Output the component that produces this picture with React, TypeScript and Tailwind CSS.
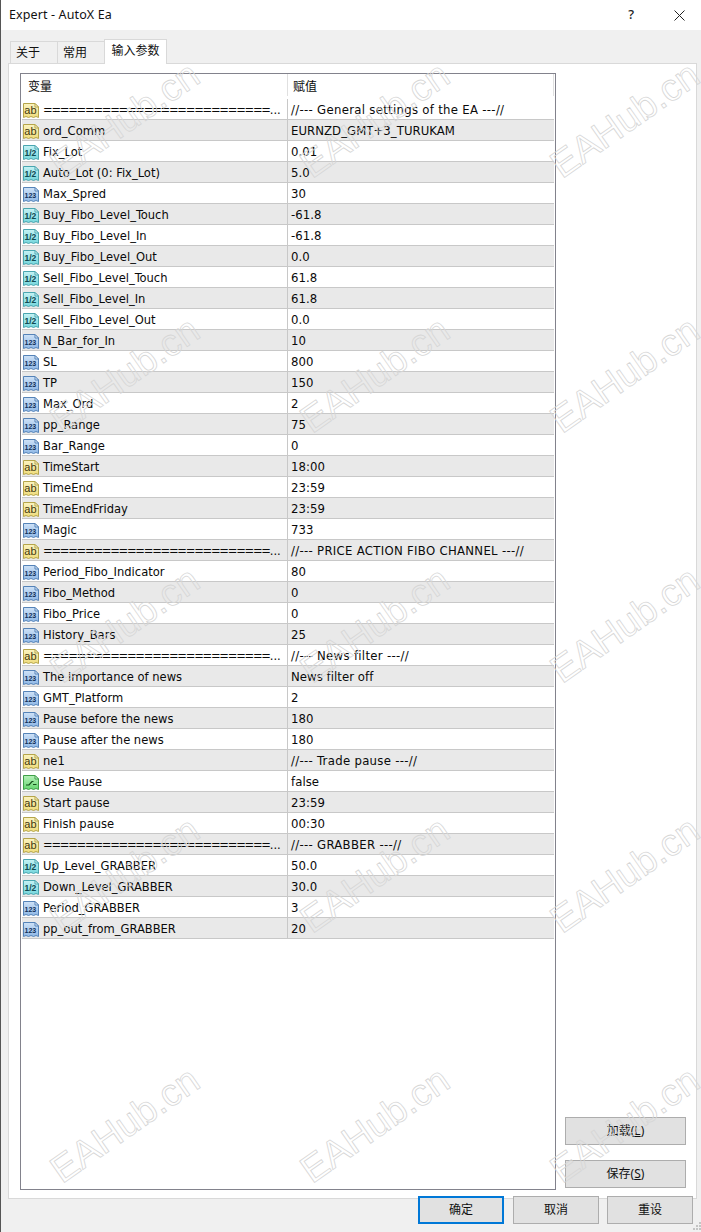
const sans = 'font-["Noto_Sans","Noto_Sans_CJK_SC",sans-serif]'

type Kind = 'ab' | 'dbl' | 'int' | 'bool'

const eq = '==========================='

const rows: [Kind, string, string][] = [
  ['ab', eq, '//--- General settings of the EA ---//'],
  ['ab', 'ord_Comm', 'EURNZD_GMT+3_TURUKAM'],
  ['dbl', 'Fix_Lot', '0.01'],
  ['dbl', 'Auto_Lot (0: Fix_Lot)', '5.0'],
  ['int', 'Max_Spred', '30'],
  ['dbl', 'Buy_Fibo_Level_Touch', '-61.8'],
  ['dbl', 'Buy_Fibo_Level_In', '-61.8'],
  ['dbl', 'Buy_Fibo_Level_Out', '0.0'],
  ['dbl', 'Sell_Fibo_Level_Touch', '61.8'],
  ['dbl', 'Sell_Fibo_Level_In', '61.8'],
  ['dbl', 'Sell_Fibo_Level_Out', '0.0'],
  ['int', 'N_Bar_for_In', '10'],
  ['int', 'SL', '800'],
  ['int', 'TP', '150'],
  ['int', 'Max_Ord', '2'],
  ['int', 'pp_Range', '75'],
  ['int', 'Bar_Range', '0'],
  ['ab', 'TimeStart', '18:00'],
  ['ab', 'TimeEnd', '23:59'],
  ['ab', 'TimeEndFriday', '23:59'],
  ['int', 'Magic', '733'],
  ['ab', eq, '//--- PRICE ACTION FIBO CHANNEL ---//'],
  ['int', 'Period_Fibo_Indicator', '80'],
  ['int', 'Fibo_Method', '0'],
  ['int', 'Fibo_Price', '0'],
  ['int', 'History_Bars', '25'],
  ['ab', eq, '//--- News filter ---//'],
  ['int', 'The importance of news', 'News filter off'],
  ['int', 'GMT_Platform', '2'],
  ['int', 'Pause before the news', '180'],
  ['int', 'Pause after the news', '180'],
  ['ab', 'ne1', '//--- Trade pause ---//'],
  ['bool', 'Use Pause', 'false'],
  ['ab', 'Start pause', '23:59'],
  ['ab', 'Finish pause', '00:30'],
  ['ab', eq, '//--- GRABBER ---//'],
  ['dbl', 'Up_Level_GRABBER', '50.0'],
  ['dbl', 'Down_Level_GRABBER', '30.0'],
  ['int', 'Period_GRABBER', '3'],
  ['int', 'pp_out_from_GRABBER', '20'],
]

const iconColors: Record<Kind, { top: string; fill: string; edge: string; fold: string; ink: string }> = {
  ab: { top: '#fbf3c0', fill: '#efdc7c', edge: '#b5a54a', fold: '#fffbe0', ink: '#3f3810' },
  dbl: { top: '#c6f2f4', fill: '#74d6dc', edge: '#4aa6b0', fold: '#e6fbfc', ink: '#0f4a52' },
  int: { top: '#cfe2f7', fill: '#8fb8e6', edge: '#5583b8', fold: '#eaf3fd', ink: '#12305a' },
  bool: { top: '#b6f0b9', fill: '#66d670', edge: '#3f9f48', fold: '#e0fae2', ink: '#14501a' },
}

function TypeIcon({ kind }: { kind: Kind }) {
  const c = iconColors[kind]
  return (
    <svg width="17" height="17" viewBox="0 0 17 17" className="shrink-0">
      <defs>
        <linearGradient id={`icon-${kind}`} x1="0" y1="0" x2="0" y2="1">
          <stop offset="0" stopColor={c.top} />
          <stop offset="1" stopColor={c.fill} />
        </linearGradient>
      </defs>
      <path d="M.5 1.5H12L15.5 5V15.5L13 14.5L10.5 15.5L8 14.5L5.5 15.5L3 14.5L.5 15.5Z" fill={`url(#icon-${kind})`} stroke={c.edge} />
      <path d="M12 1.5V5H15.5Z" fill={c.fold} stroke={c.edge} />
      {kind === 'bool' ? (
        <path d="M3 11H6L9 7.5H10.5M10 10.5H13.5" fill="none" stroke={c.ink} strokeWidth="1.2" />
      ) : (
        <text
          x="7.4"
          y="12"
          textAnchor="middle"
          fontFamily="'Liberation Sans',sans-serif"
          fontWeight={kind === 'ab' ? 400 : 700}
          fontSize={kind === 'ab' ? 11 : kind === 'dbl' ? 8.5 : 7}
          fill={c.ink}
        >
          {kind === 'ab' ? 'ab' : kind === 'dbl' ? '1/2' : '123'}
        </text>
      )}
    </svg>
  )
}

function Tab({ label, active }: { label: string; active?: boolean }) {
  if (active) {
    return (
      <div className="relative z-10 -mb-px flex h-[25px] w-[63px] items-center justify-center border border-b-0 border-[#d9d9d9] bg-white pb-[2px] text-[12px] text-[#111]">
        {label}
      </div>
    )
  }
  return (
    <div className="flex h-[22px] w-[47px] items-center border border-b-0 border-r-0 border-[#d9d9d9] bg-[#f0f0f0] pl-[5px] text-[12px] text-[#111]">
      {label}
    </div>
  )
}

function Btn({ label, className }: { label: React.ReactNode; className: string }) {
  return (
    <div className={`flex h-[28px] items-center justify-center bg-[#e1e1e1] text-[12px] text-[#111] ${className}`}>
      {label}
    </div>
  )
}

function Watermarks() {
  const xs = [124, 374, 624]
  const ys = [120, 375, 625, 875, 1125]
  return (
    <>
      {ys.map((y) =>
        xs.map((x) => (
          <div
            key={`${x}-${y}`}
            className='pointer-events-none absolute z-20 w-[180px] -translate-x-1/2 -translate-y-1/2 -rotate-[35deg] text-center font-["Liberation_Sans",sans-serif] text-[38px] text-transparent [-webkit-text-stroke:0.8px_#d6d6d6]'
            style={{ left: x, top: y }}
          >
            EAHub.cn
          </div>
        )),
      )}
    </>
  )
}

export default function App() {
  return (
    <div className={`relative flex h-[1232px] w-[701px] flex-col overflow-hidden border-l border-[#555] bg-[#f0f0f0] ${sans}`}>
      <div className="flex h-[30px] shrink-0 items-center justify-between bg-white pl-[8px] pr-[16px]">
        <span className="text-[12.5px] tracking-[0.12px] text-[#111]">Expert - AutoX Ea</span>
        <div className="flex items-center gap-[40px]">
          <span className="text-[13px] font-medium text-[#222]">?</span>
          <svg width="11" height="11" viewBox="0 0 11 11">
            <path d="M.5.5l10 10M10.5.5l-10 10" stroke="#222" fill="none" />
          </svg>
        </div>
      </div>

      <div className="flex h-[33px] shrink-0 items-end pl-[9px]">
        <Tab label="关于" />
        <Tab label="常用" />
        <Tab label="输入参数" active />
      </div>

      <div className="ml-[7px] mr-[4px] flex h-[1136px] shrink-0 gap-[9px] border border-[#d9d9d9] bg-white pb-[8px] pl-[11px] pr-[9px] pt-[9px]">
        <div className='flex h-full w-[536px] shrink-0 flex-col border border-[#82828c] bg-white px-px font-["DejaVu_Sans_Condensed","DejaVu_Sans","Noto_Sans_CJK_SC",sans-serif] text-[#0a0a0a]'>
          <div className={`flex h-[25px] shrink-0 ${sans}`}>
            <div className="flex w-[265px] items-center pl-[6px] pt-[1px] text-[12px]">变量</div>
            <div className="mb-[3px] flex w-[267px] items-center border-l border-r border-[#e0e0e0] pl-[5px] pt-[4px] text-[12px]">赋值</div>
          </div>
          {rows.map(([kind, name, value], i) => (
            <div
              key={i}
              className={`flex h-[21px] shrink-0 border-b border-[#c8c8c8] ${i % 2 ? 'bg-[#e9e9e9]' : 'bg-white'}`}
            >
              <div className="flex w-[265px] items-center gap-[3px] overflow-hidden whitespace-nowrap pl-[1px] pt-[2px] text-[12.8px]">
                <TypeIcon kind={kind} />
                {name === eq ? (
                  <span>
                    <span className="tracking-[-1.25px]">{name}</span>...
                  </span>
                ) : (
                  <span>{name}</span>
                )}
              </div>
              <div
                className={`flex w-[267px] items-center whitespace-nowrap border-l border-[#c8c8c8] pl-[3px] pt-[2px] text-[13px] ${
                  value.startsWith('//') ? 'tracking-[0.3px]' : 'tracking-[0.05px]'
                }`}
              >
                {value}
              </div>
            </div>
          ))}
        </div>
        <div className="flex flex-1 flex-col items-stretch justify-end gap-[15px] pb-[2px]">
          <Btn label={<>加载(<u>L</u>)</>} className="w-[121px] border border-[#adadad]" />
          <Btn label={<>保存(<u>S</u>)</>} className="w-[121px] border border-[#adadad]" />
        </div>
      </div>

      <div className="relative z-10 -mt-[3px] flex flex-1 items-start pl-[417px]">
        <Btn label="确定" className="mr-[9px] w-[86px] border-2 border-[#0078d7]" />
        <Btn label="取消" className="mr-[8px] w-[86px] border border-[#adadad]" />
        <Btn label="重设" className="w-[86px] border border-[#adadad]" />
      </div>

      <svg width="10" height="10" viewBox="0 0 10 10" className="absolute bottom-0 right-0">
        <path d="M8 0h2v2H8zM5 3h2v2H5zM8 3h2v2H8zM2 6h2v2H2zM5 6h2v2H5zM8 6h2v2H8z" fill="#c4c4c4" />
      </svg>

      <Watermarks />
    </div>
  )
}
